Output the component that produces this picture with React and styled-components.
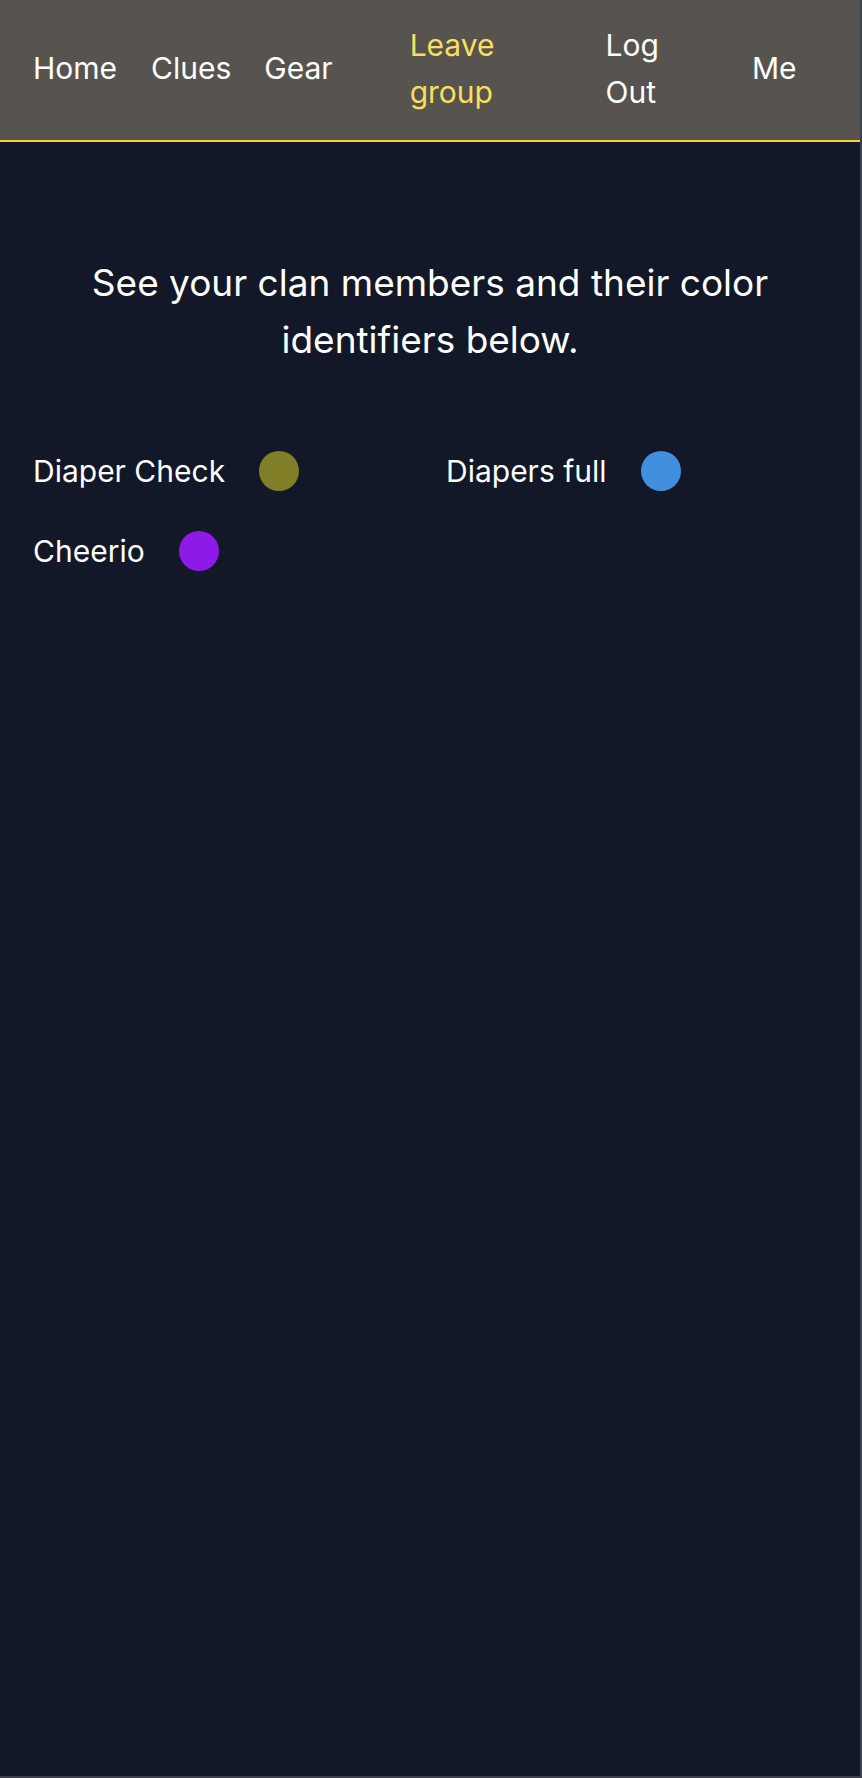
import React from "react";
import styled, { createGlobalStyle } from "styled-components";

const GlobalStyle = createGlobalStyle`
  html, body {
    margin: 0;
    padding: 0;
    background: #121827;
  }
  body {
    font-family: Inter, "Liberation Sans", sans-serif;
    color: #ffffff;
  }
`;

/* PÁGINA */
const Page = styled.div`
  box-sizing: border-box;
  min-height: 1778px;
  background: #121827;
  border-right: 2px solid #3c414b;
  border-bottom: 2px solid #3c414b;
`;

/* BARRA DE NAVEGAÇÃO */
const Nav = styled.nav`
  display: flex;
  align-items: center;
  box-sizing: border-box;
  height: 142px;
  padding: 0 65px 3px 33px;
  background: #57544f;
  border-bottom: 2px solid #f8cf3e;
`;

const NavGroup = styled.div`
  display: flex;
  align-items: center;
  margin-left: ${(p) => p.$offset || 0}px;
`;

const NavLink = styled.a`
  display: block;
  width: ${(p) => (p.$wrap ? "min-content" : "auto")};
  margin-left: ${(p) => p.$gap || 0}px;
  font-size: 30px;
  line-height: 47px;
  color: ${(p) => (p.$accent ? "#f9de62" : "#ffffff")};
  text-decoration: none;
  cursor: pointer;
`;

/* CONTEÚDO */
const Main = styled.main`
  padding: 112px 33px 0 33px;
`;

const Heading = styled.h2`
  margin: 0 0 83px 0;
  font-size: 37px;
  font-weight: 400;
  line-height: 57px;
  text-align: center;
`;

const MemberGrid = styled.div`
  display: grid;
  grid-template-columns: 1fr 1fr;
  column-gap: 32px;
  row-gap: 40px;
`;

const Member = styled.div`
  display: flex;
  align-items: center;
  gap: 34px;
  font-size: 30px;
`;

const Dot = styled.span`
  display: block;
  width: 40px;
  height: 40px;
  border-radius: 50%;
  background: ${(p) => p.$color};
`;

const members = [
  { name: "Diaper Check", color: "#807f27" },
  { name: "Diapers full", color: "#418fdd" },
  { name: "Cheerio", color: "#8e1ae7" },
];

export default function App() {
  return (
    <>
      <GlobalStyle />
      <Page>
        <Nav>
          <NavGroup>
            <NavLink>Home</NavLink>
            <NavLink $gap={34}>Clues</NavLink>
            <NavLink $gap={33}>Gear</NavLink>
          </NavGroup>
          <NavGroup $offset={77}>
            <NavLink $wrap $accent>Leave group</NavLink>
            <NavLink $wrap $gap={111}>Log Out</NavLink>
            <NavLink $gap={93}>Me</NavLink>
          </NavGroup>
        </Nav>
        <Main>
          <Heading>See your clan members and their color identifiers below.</Heading>
          <MemberGrid>
            {members.map((m) => (
              <Member key={m.name}>
                <span>{m.name}</span>
                <Dot $color={m.color} />
              </Member>
            ))}
          </MemberGrid>
        </Main>
      </Page>
    </>
  );
}
